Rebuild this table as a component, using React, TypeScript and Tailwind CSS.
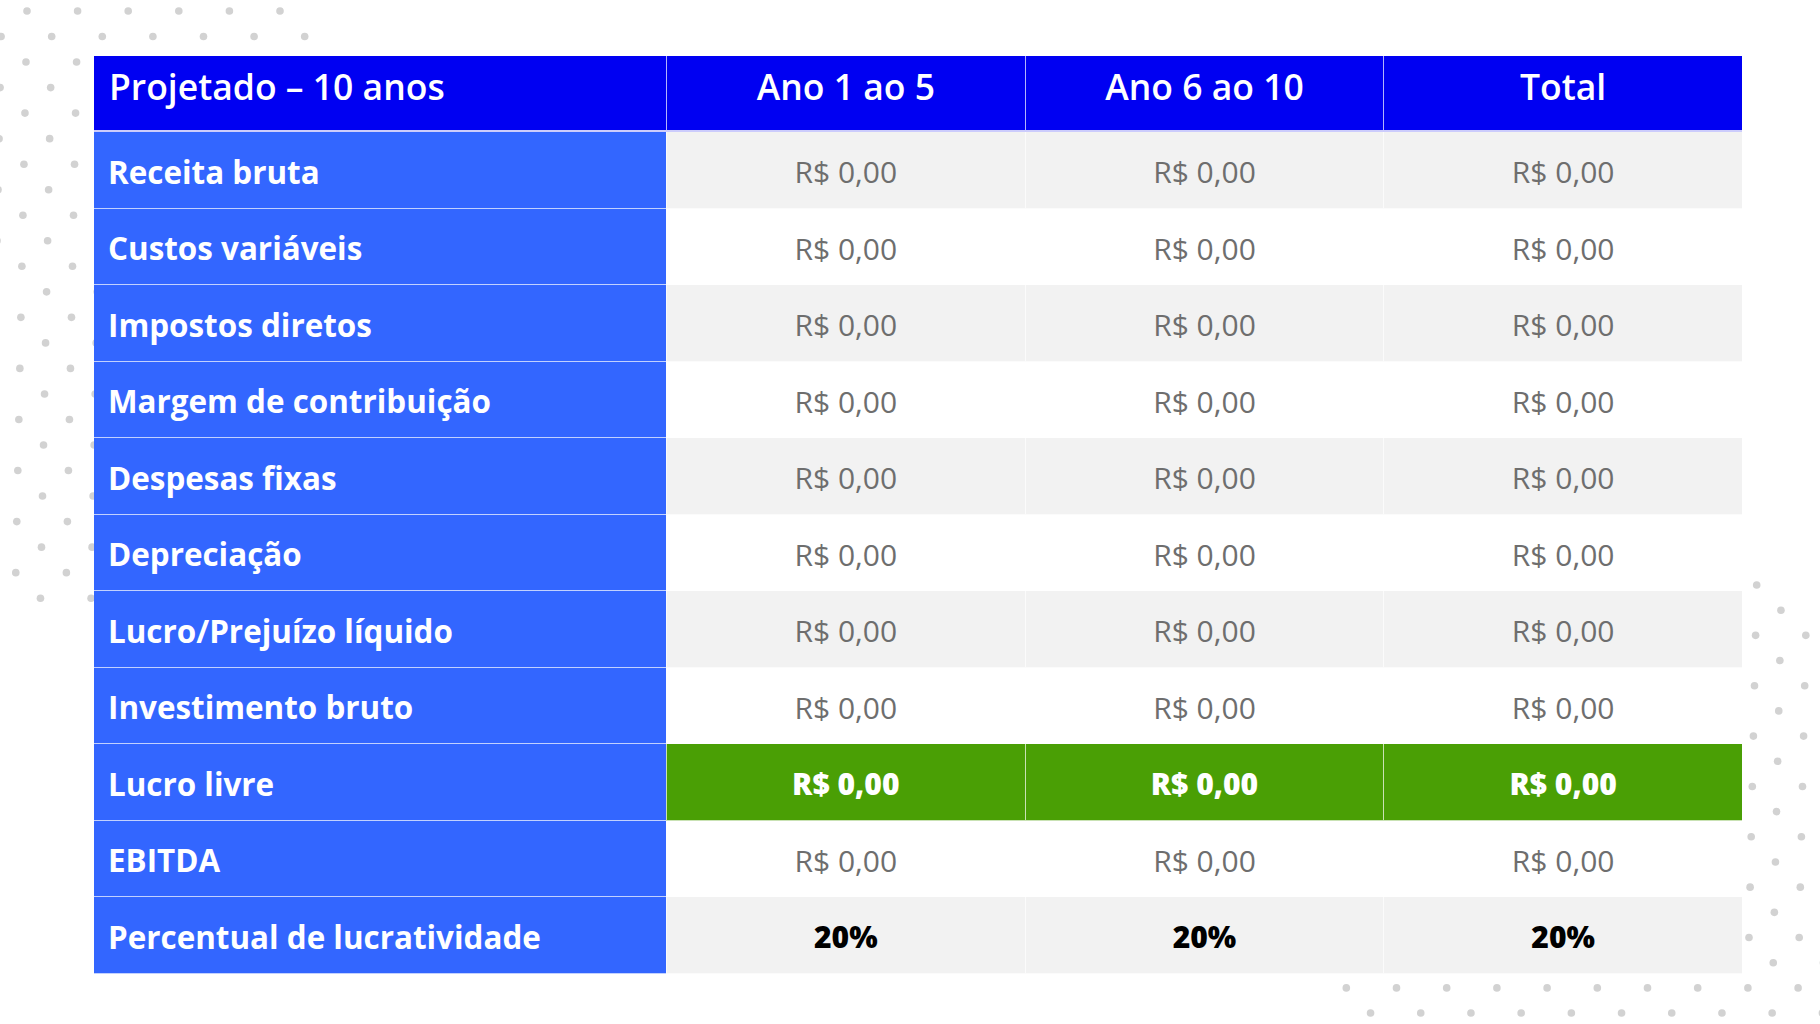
const columns = ["Ano 1 ao 5", "Ano 6 ao 10", "Total"]

const rows = [
  { label: "Receita bruta", value: "R$ 0,00", tone: "gray" },
  { label: "Custos variáveis", value: "R$ 0,00", tone: "white" },
  { label: "Impostos diretos", value: "R$ 0,00", tone: "gray" },
  { label: "Margem de contribuição", value: "R$ 0,00", tone: "white" },
  { label: "Despesas fixas", value: "R$ 0,00", tone: "gray" },
  { label: "Depreciação", value: "R$ 0,00", tone: "white" },
  { label: "Lucro/Prejuízo líquido", value: "R$ 0,00", tone: "gray" },
  { label: "Investimento bruto", value: "R$ 0,00", tone: "white" },
  { label: "Lucro livre", value: "R$ 0,00", tone: "green" },
  { label: "EBITDA", value: "R$ 0,00", tone: "white" },
  { label: "Percentual de lucratividade", value: "20%", tone: "percent" },
]

// staggered dot fields in the top-left and bottom-right corners
function buildDots() {
  const dots: { x: number; y: number }[] = []
  for (let r = 0; r < 27; r++) {
    const y = 11 + 25.53 * r
    const base = (r % 2 === 0 ? 27 : 1.6) - 0.51 * r
    for (let k = -1; k < 8; k++) {
      const x = base + 50.6 * k
      if (x >= -4 && x <= 310 && y - x <= 558) dots.push({ x, y })
    }
  }
  for (let r = 0; r < 18; r++) {
    const y = 585 + 25.18 * r
    const base = (r % 2 === 0 ? 1756.7 : 1781.5) - 0.55 * r
    for (let k = -10; k < 3; k++) {
      const x = base + 50.2 * k
      if (x + y >= 2333.9 && x - y <= 1173 && x <= 1824) dots.push({ x, y })
    }
  }
  return dots
}

const dots = buildDots()

function ValueCell({ value, tone }: { value: string; tone: string }) {
  const bg =
    tone === "gray" || tone === "percent" ? "bg-[#f2f2f2]" : tone === "green" ? "bg-[#4a9f05]" : "bg-white"
  const text =
    tone === "green"
      ? "text-white font-extrabold"
      : tone === "percent"
        ? "text-black font-extrabold"
        : "text-[#6e6e6e] font-normal"
  return (
    <div
      className={`${bg} border-l-[1.5px] border-b border-white/70 flex items-center justify-center pt-[5px] text-[30px] leading-none ${text}`}
    >
      {value}
    </div>
  )
}

export default function App() {
  return (
    <div className="relative min-h-screen w-full overflow-hidden bg-white" style={{ fontFamily: '"Open Sans", "Liberation Sans", sans-serif' }}>
      <svg className="pointer-events-none absolute left-0 top-0" width="1820" height="1024" viewBox="0 0 1820 1024">
        {dots.map((d, i) => (
          <circle key={i} cx={d.x} cy={d.y} r="3.8" fill="#d2d2d2" />
        ))}
      </svg>

      <div className="relative ml-[94px] pt-[56px] w-[1648px]">
        {/* Header */}
        <div className="grid grid-cols-[572px_1fr_1fr_1fr] h-[76px] bg-[#0000f2] border-b-2 border-white/80">
          <div className="flex items-center pl-[15px] pb-[13px] text-white text-[35.5px] font-semibold leading-none">
            Projetado – 10 anos
          </div>
          {columns.map((c) => (
            <div
              key={c}
              className="flex items-center justify-center pb-[13px] border-l-[1.5px] border-white/70 text-white text-[35.5px] font-semibold leading-none"
            >
              {c}
            </div>
          ))}
        </div>

        {/* Rows */}
        {rows.map((row) => (
          <div key={row.label} className="grid grid-cols-[572px_1fr_1fr_1fr] h-[76.5px]">
            <div className="bg-[#3366ff] border-b border-white/70 flex items-center pl-[14px] pt-[3px] text-white text-[31.4px] font-bold leading-none">
              {row.label}
            </div>
            {columns.map((c) => (
              <ValueCell key={c} value={row.value} tone={row.tone} />
            ))}
          </div>
        ))}
      </div>
    </div>
  )
}
